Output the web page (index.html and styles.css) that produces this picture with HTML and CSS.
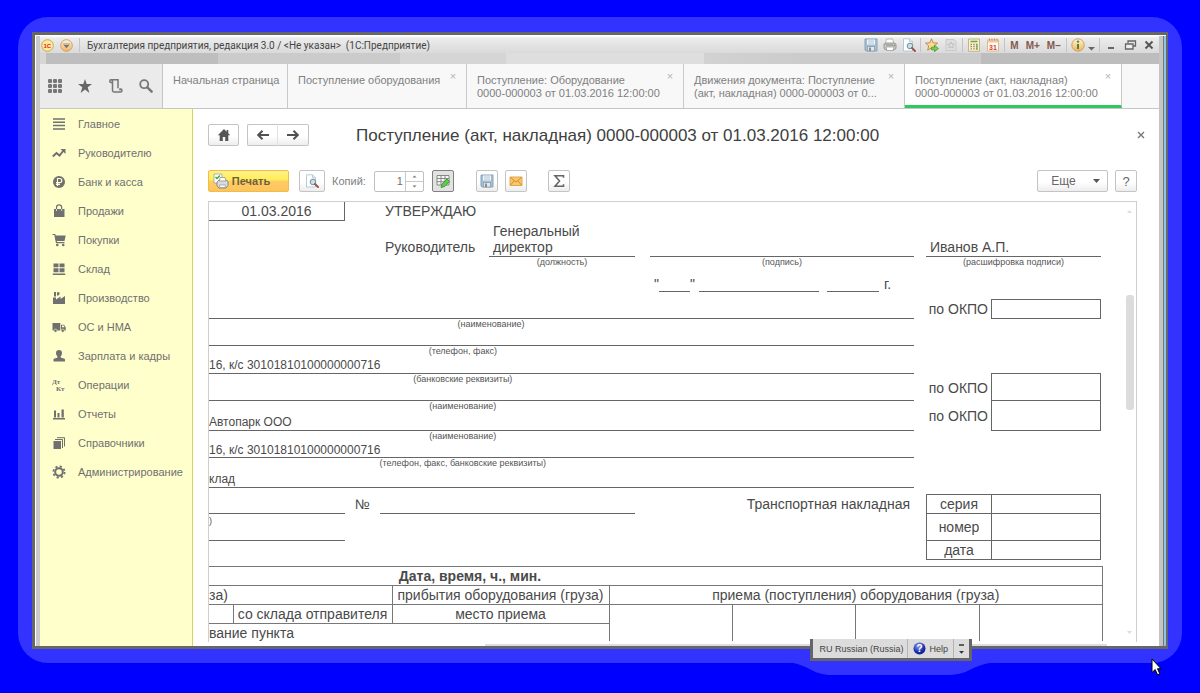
FILE: index.html
```html
<!DOCTYPE html>
<html lang="ru">
<head>
<meta charset="utf-8">
<title>Бухгалтерия предприятия, редакция 3.0</title>
<link rel="stylesheet" href="styles.css">
</head>
<body>
<svg width="0" height="0" class="defs" aria-hidden="true">
  <defs>
    <linearGradient id="gold" x1="0" y1="0" x2="0" y2="1"><stop offset="0" stop-color="#fff6dc"/><stop offset="1" stop-color="#f0b35c"/></linearGradient>
    <radialGradient id="blue" cx=".4" cy=".3" r=".8"><stop offset="0" stop-color="#8fa2f0"/><stop offset=".6" stop-color="#1c2fb0"/><stop offset="1" stop-color="#0b1a80"/></radialGradient>
    <symbol id="i-floppy" viewBox="0 0 14 14"><path d="M1 1h12v12H2l-1-1z" fill="#a5bfd4" stroke="#8ba2b5"/><path d="M3 1.5h8v5H3z" fill="#eef5fa"/><path d="M4 3h6M4 5h6" stroke="#b4c8d8"/><path d="M3.500 8.500h7V13h-7z" fill="#e4e8ea" stroke="#8c9aa5" stroke-width=".8"/><path d="M5 9.500h2V13H5z" fill="#7c8f9e"/></symbol>
    <symbol id="i-printer" viewBox="0 0 14 14"><path d="M3.5 1h6l1.500 4.500H2.500z" fill="#fff" stroke="#aaa" stroke-width=".8"/><path d="M1 6l2-1h8l2 1v4.500l-2 1.500H3l-2-1.500z" fill="#c9c9c6" stroke="#88887f" stroke-width=".8"/><path d="M3 9h8l-1 3.500H4z" fill="#fff" stroke="#999" stroke-width=".7"/><path d="M3 7h7" stroke="#888"/><circle cx="11.300" cy="7.500" r=".8" fill="#5c9e3d"/></symbol>
    <symbol id="i-preview" viewBox="0 0 14 14"><path d="M1.500 .8h6l3 3v9.200h-9z" fill="#fff" stroke="#a9c6d4" stroke-width=".9"/><path d="M7.500 .8v3h3" fill="#dceaf1" stroke="#a9c6d4" stroke-width=".8"/><circle cx="8" cy="8" r="2.800" fill="#c4e2ee" stroke="#7a8c96"/><path d="M10 10l3 3" stroke="#96574c" stroke-width="2" stroke-linecap="round"/></symbol>
    <symbol id="i-favadd" viewBox="0 0 14 14"><path d="M6.500 .8l1.700 4 4.400.3-3.300 2.800 1 4.300-3.800-2.300-3.800 2.300 1-4.300L.5 5.100l4.300-.3z" fill="#fbd98f" stroke="#b9854a" stroke-width=".9"/><path d="M6.500 9.200h3V7.300l4 3.200-4 3.200v-1.900h-3z" fill="#7dcf4f" stroke="#3b8d28" stroke-width=".7"/></symbol>
    <symbol id="i-favs" viewBox="0 0 14 14"><path d="M2 1.500h8l2 2v9H2z" fill="#dedede" stroke="#c9c9c9"/><path d="M7 4l1 2.100 2.300.2-1.700 1.500.5 2.300L7 8.900l-2.100 1.200.5-2.300-1.700-1.500 2.300-.2z" fill="none" stroke="#b7b7b7" stroke-width=".8"/></symbol>
    <symbol id="i-calc" viewBox="0 0 14 14"><path d="M1.500 1h11v12.300h-11z" fill="#f8f1d2" stroke="#c4b484"/><path d="M3.500 2.700h7v1.600h-7z" fill="#6ea950"/><path d="M3.500 6.500h7M3.500 8.700h7M3.500 10.900h7" stroke="#9c8c64" stroke-width="1.300" stroke-dasharray="1.500 1.200"/><path d="M10 6v6" stroke="#5fa247"/></symbol>
    <symbol id="i-cal" viewBox="0 0 14 14"><path d="M1.500 2h11v11h-11z" fill="#fffdf5" stroke="#d9b98a"/><path d="M1.500 1.500h11v3h-11z" fill="#f5c697"/><path d="M3.500 .5v2M6 .5v2M8.500 .5v2M11 .5v2" stroke="#b37f52" stroke-width=".8"/></symbol>
    <symbol id="i-home" viewBox="0 0 14 14"><path d="M7 1L.8 7.300h1.900V13h3.100V9h2.400v4h3.100V7.300h1.900L11.300 5.300V2H9.700v1.700z" fill="#555"/></symbol>
    <symbol id="i-left" viewBox="0 0 14 14"><path d="M13 7H2.500M6.500 2.800L2.200 7l4.300 4.200" fill="none" stroke="#505050" stroke-width="2"/></symbol>
    <symbol id="i-right" viewBox="0 0 14 14"><path d="M1 7h10.500M7.500 2.800L11.800 7l-4.300 4.200" fill="none" stroke="#505050" stroke-width="2"/></symbol>
  </defs>
</svg>

<div class="halo">
  <div class="window">
    <header class="titlebar">
      <svg class="logo" viewBox="0 0 13 13"><circle cx="6.500" cy="6.500" r="5.800" fill="#ffeb9a" stroke="#cda65c"/><text x="6.300" y="9" text-anchor="middle" class="logo-text">1C</text></svg>
      <svg class="logo menu-ball" viewBox="0 0 13 13"><circle cx="6.500" cy="6.500" r="5.800" fill="url(#gold)" stroke="#cfa066"/><path d="M3.500 6h6l-3 3.200z" fill="#777"/><path d="M3 5h7" stroke="#999"/></svg>
      <span class="vsep"></span>
      <span class="app-name">Бухгалтерия предприятия, редакция 3.0 / &lt;Не указан&gt;&nbsp; (1С:Предприятие)</span>
      <div class="tools">
        <svg><use href="#i-floppy"/></svg><svg><use href="#i-printer"/></svg><svg><use href="#i-preview"/></svg>
        <span class="vsep"></span>
        <svg><use href="#i-favadd"/></svg><svg><use href="#i-favs"/></svg>
        <span class="vsep"></span>
        <svg><use href="#i-calc"/></svg>
        <svg viewBox="0 0 14 14"><use href="#i-cal"/><text x="7" y="12" text-anchor="middle" class="cal-text">31</text></svg>
        <span class="vsep"></span>
        <button class="mem">M</button><button class="mem">M+</button><button class="mem">M−</button>
        <span class="vsep"></span>
        <svg viewBox="0 0 14 14"><circle cx="7" cy="7" r="6.200" fill="url(#gold)" stroke="#d09c5a"/><path d="M7 6v5" stroke="#4b8a35" stroke-width="2"/><circle cx="7" cy="3.600" r="1.200" fill="#4b8a35"/></svg>
        <svg class="narrow" viewBox="0 0 7 14"><path d="M0 9h7L3.500 12.500z" fill="#666"/></svg>
        <span class="vsep"></span>
        <svg viewBox="0 0 14 14"><path d="M4 10h6" stroke="#666" stroke-width="2"/></svg>
        <svg viewBox="0 0 14 14"><path d="M5 5V3h7.500v5H10" fill="none" stroke="#666" stroke-width="1.300"/><path d="M2.500 6H10v5H2.500z" fill="#eee" stroke="#666" stroke-width="1.300"/></svg>
        <svg viewBox="0 0 14 14"><path d="M3.500 3.500l7 7M10.500 3.500l-7 7" stroke="#555" stroke-width="1.900"/></svg>
      </div>
    </header>
    <div class="blurstrip"></div>

    <nav class="tabs">
      <div class="quick">
        <svg viewBox="0 0 16 16"><g fill="#777"><rect x="1" y="1" width="4" height="4" rx="1"/><rect x="6" y="1" width="4" height="4" rx="1"/><rect x="11" y="1" width="4" height="4" rx="1"/><rect x="1" y="6" width="4" height="4" rx="1"/><rect x="6" y="6" width="4" height="4" rx="1"/><rect x="11" y="6" width="4" height="4" rx="1"/><rect x="1" y="11" width="4" height="4" rx="1"/><rect x="6" y="11" width="4" height="4" rx="1"/><rect x="11" y="11" width="4" height="4" rx="1"/></g></svg>
        <svg viewBox="0 0 16 16"><path d="M8 1l1.700 5h5.300l-4.300 3.200L12.400 15 8 11.500 3.600 15l1.700-5.800L1 6h5.300z" fill="#666"/></svg>
        <svg viewBox="0 0 16 16"><path d="M4.500 5V3.200A1.700 1.700 0 0 0 2.800 1.800C1.500 1.800 1.500 4.500 2.800 4.500h1.700M2.800 1.800H10v8.500M4.500 4v8.200A1.700 1.700 0 0 0 6.200 14h6.500c1.700 0 1.700-3 0-3H12v1.500" fill="none" stroke="#777" stroke-width="1.500"/></svg>
        <svg viewBox="0 0 16 16"><circle cx="6.200" cy="6.200" r="4" fill="none" stroke="#777" stroke-width="1.800"/><path d="M9.300 9.300l4.400 4.400" stroke="#777" stroke-width="2.400" stroke-linecap="round"/></svg>
      </div>
      <div class="tab t-home"><a href="#">Начальная страница</a></div>
      <div class="tab t-list"><a href="#">Поступление оборудования</a><button class="x" aria-label="Закрыть">×</button></div>
      <div class="tab t-doc"><a href="#">Поступление: Оборудование<br>0000-000003 от 01.03.2016 12:00:00</a><button class="x" aria-label="Закрыть">×</button></div>
      <div class="tab t-moves"><a href="#">Движения документа: Поступление<br>(акт, накладная) 0000-000003 от 0...</a><button class="x" aria-label="Закрыть">×</button></div>
      <div class="tab t-doc active"><a href="#">Поступление (акт, накладная)<br>0000-000003 от 01.03.2016 12:00:00</a><button class="x" aria-label="Закрыть">×</button></div>
      <div class="tab-rest"></div>
    </nav>

    <div class="body">
      <aside class="side">
        <a href="#"><svg viewBox="0 0 14 14"><path d="M1 2h12M1 5.300h12M1 8.600h12M1 12h12" stroke="#707070" stroke-width="1.500"/></svg>Главное</a>
        <a href="#"><svg viewBox="0 0 14 14"><path d="M.8 10.500L4.500 7l3 2.500 4-5" fill="none" stroke="#707070" stroke-width="2"/><path d="M8.500 3h5v5z" fill="#707070"/></svg>Руководителю</a>
        <a href="#"><svg viewBox="0 0 14 14"><circle cx="7" cy="7" r="6" fill="#707070"/><path d="M5.500 11V3.500h2.200a2 2 0 0 1 0 4.200H4M4 9.400h4" fill="none" stroke="#ffffcc" stroke-width="1.200"/></svg>Банк и касса</a>
        <a href="#"><svg viewBox="0 0 14 14"><path d="M2 5h10.500v8H2z" fill="#707070"/><path d="M4.500 7V3.500a2.600 2.600 0 0 1 5.200 0V7" fill="none" stroke="#707070" stroke-width="1.200"/><path d="M4.500 5v2M9.700 5v2" stroke="#ffffcc" stroke-width=".8"/></svg>Продажи</a>
        <a href="#"><svg viewBox="0 0 14 14"><path d="M.5 1.500h2.300l1.700 8.200h8" fill="none" stroke="#707070" stroke-width="1.200"/><path d="M3 2.500h10.700L12.500 8H4z" fill="#707070"/><circle cx="5.300" cy="12" r="1.300" fill="#707070"/><circle cx="11.200" cy="12" r="1.300" fill="#707070"/></svg>Покупки</a>
        <a href="#"><svg viewBox="0 0 14 14"><path d="M1.500 1.500h5v3.800h-5zM7.500 1.500h5v3.800h-5zM1.500 6.300h5v4h-5zM7.500 6.300h5v4h-5zM.8 11.500h12.400V13H.8z" fill="#707070"/></svg>Склад</a>
        <a href="#"><svg viewBox="0 0 14 14"><path d="M1 13V6.500h3V8.500l4.500-3V8L13 5v8z" fill="#707070"/><path d="M2 5.500V1h2v4.500zM5 4.500V1.200h2.500V3L6.500 4.500z" fill="#707070"/></svg>Производство</a>
        <a href="#"><svg viewBox="0 0 14 14"><path d="M.5 3h7.800v7.500H.5zM9 4.800h3l1.700 2.500v3.200H9z" fill="#707070"/><path d="M10 5.600h1.700l.9 1.600H10z" fill="#ffffcc"/><circle cx="3.500" cy="10.700" r="1.600" fill="#707070" stroke="#ffffcc" stroke-width=".6"/><circle cx="10.800" cy="10.700" r="1.600" fill="#707070" stroke="#ffffcc" stroke-width=".6"/></svg>ОС и НМА</a>
        <a href="#"><svg viewBox="0 0 14 14"><path d="M7 1c2 0 3 1.200 3 3 0 1.500-.6 2.600-1.400 3.300L9 8.800l3 .8c.8.300 1 .8 1 1.500V12.500H1.500v-1.400c0-.7.200-1.200 1-1.500l2.700-.8.300-1.500C4.600 6.600 4 5.500 4 4c0-1.800 1-3 3-3z" fill="#707070"/></svg>Зарплата и кадры</a>
        <a href="#"><svg viewBox="0 0 14 14"><text x="0" y="6" class="dk-text">Дт</text><text x="4" y="13" class="dk-text">Кт</text></svg>Операции</a>
        <a href="#"><svg viewBox="0 0 14 14"><path d="M2 3.500h2v7H2zM5.500 6h2v4.500h-2zM9.500 2.500h2.300v8H9.500zM1 11h12v1.500H1z" fill="#707070"/></svg>Отчеты</a>
        <a href="#"><svg viewBox="0 0 14 14"><path d="M1.500 5h7.500v8H1.500z" fill="#707070"/><path d="M3 3.500h7.500v8.500M5 1.700h7.500v8.800" fill="none" stroke="#707070"/></svg>Справочники</a>
        <a href="#"><svg viewBox="0 0 14 14"><circle cx="7" cy="7" r="3.800" fill="none" stroke="#707070" stroke-width="2"/><circle cx="7" cy="7" r="5.600" fill="none" stroke="#707070" stroke-width="1.800" stroke-dasharray="2.200 2.200"/></svg>Администрирование</a>
      </aside>

      <main class="content">
        <div class="headrow">
          <button class="btn home" aria-label="Начальная страница"><svg><use href="#i-home"/></svg></button>
          <div class="pair"><button class="btn" aria-label="Назад"><svg><use href="#i-left"/></svg></button><button class="btn" aria-label="Вперед"><svg><use href="#i-right"/></svg></button></div>
          <h1>Поступление (акт, накладная) 0000-000003 от 01.03.2016 12:00:00</h1>
          <button class="close" aria-label="Закрыть"><svg viewBox="0 0 8 8"><path d="M1 1l6 6M7 1L1 7" stroke="#777" stroke-width="1.400"/></svg></button>
        </div>
        <div class="toolrow">
          <button class="btn print"><svg viewBox="0 0 16 16"><path d="M1 1h8v9H1z" fill="#fff" stroke="#9aa694" stroke-width=".8"/><path d="M2.500 4l1.500 1.500L7 2.500" fill="none" stroke="#3da336" stroke-width="1.300"/><path d="M4 9l2-2h7l2 1.500v4L13 15H6l-2-2z" fill="#d9dbdc" stroke="#70777c" stroke-width=".8"/><path d="M7 4.500h5L13 8H6.500z" fill="#fff" stroke="#888" stroke-width=".7"/><path d="M6.500 12h6l-.5 2.500H7z" fill="#fff" stroke="#888" stroke-width=".6"/></svg>Печать</button>
          <button class="btn preview" aria-label="Просмотр"><svg><use href="#i-preview"/></svg></button>
          <label for="copies">Копий:</label>
          <div class="spin"><input id="copies" type="text" value="1"><div class="steps"><button aria-label="Больше"><svg viewBox="0 0 5 3"><path d="M.5 2.500L2.500.5l2 2z" fill="#777"/></svg></button><button aria-label="Меньше"><svg viewBox="0 0 5 3"><path d="M.5.5l2 2 2-2z" fill="#777"/></svg></button></div></div>
          <button class="btn sq on" aria-label="Редактирование"><svg viewBox="0 0 14 14"><path d="M1 1.500h12v9.500H1z" fill="#f7f7f7" stroke="#888"/><path d="M1 4.500h12M1 7.700h12M5 1.500V11M9 1.500V11" stroke="#888"/><path d="M5 13.500l1-3.500 5-5 2.700 2.500-5 5z" fill="#5fc94b" stroke="#2f8f2a" stroke-width=".8"/></svg></button>
          <button class="btn sq save" aria-label="Сохранить"><svg><use href="#i-floppy"/></svg></button>
          <button class="btn sq mail" aria-label="Отправить"><svg viewBox="0 0 14 14"><path d="M1 3h12v8.500H1z" fill="#fbc766" stroke="#e0a850"/><path d="M1.500 3.500L7 8l5.500-4.500M1.500 11L5 7M12.500 11L9 7" fill="none" stroke="#c9862c" stroke-width=".9"/></svg></button>
          <button class="btn sq sum" aria-label="Сумма"><svg viewBox="0 0 14 14"><path d="M11.500 3.800V1.800H3L7.500 7 3 12.200h8.500v-2" fill="none" stroke="#666" stroke-width="1.600"/></svg></button>
          <button class="btn more">Еще<svg viewBox="0 0 7 4"><path d="M0 0h7L3.500 4z" fill="#555"/></svg></button>
          <button class="btn sq help">?</button>
        </div>

        <section class="pane">
          <div class="view">
            <div class="form">
              <div class="c date-box">01.03.2016</div>
              <div class="c approve">УТВЕРЖДАЮ</div>
              <div class="c head">Руководитель</div>
              <div class="c post line">Генеральный<br>директор</div>
              <div class="c sign line"></div>
              <div class="c name line">Иванов А.П.</div>
              <small class="post-cap">(должность)</small>
              <small class="sign-cap">(подпись)</small>
              <small class="name-cap">(расшифровка подписи)</small>
              <div class="when"><span>"</span><i class="d"></i><span>"</span><i class="m"></i><i class="y"></i><span>г.</span></div>
              <div class="l r5"></div>
              <div class="l r7"><small class="far">(наименование)</small></div>
              <div class="l r8"><small>(телефон, факс)</small><span>16, к/с 30101810100000000716</span></div>
              <div class="l r9"><small>(банковские реквизиты)</small></div>
              <div class="l r10"><small>(наименование)</small><span>Автопарк ООО</span></div>
              <div class="l r11"><small>(наименование)</small><span>16, к/с 30101810100000000716</span></div>
              <div class="l r12"><small>(телефон, факс, банковские реквизиты)</small><span>клад</span></div>
              <div class="okpo k5">по ОКПО</div><div class="box b5 top"></div>
              <div class="okpo k9">по ОКПО</div><div class="box b9 top"></div>
              <div class="okpo k10">по ОКПО</div><div class="box b10"></div>
              <div class="c num-l line"></div>
              <div class="c num-sign">№</div>
              <div class="c num-r line"></div>
              <div class="c waybill">Транспортная накладная</div>
              <div class="c paren line"><small>)</small></div>
              <div class="lab s1 top">серия</div><div class="box v1 top"></div>
              <div class="lab s2">номер</div><div class="box v2"></div>
              <div class="lab s3">дата</div><div class="box v3"></div>
            </div>
            <table class="times">
              <colgroup><col class="w1"><col class="w2"><col class="w3"><col class="w4"><col class="w4"><col class="w4"><col class="w4"></colgroup>
              <tr><th colspan="7">Дата, время, ч., мин.</th></tr>
              <tr><td colspan="2" class="tl">за)</td><td>прибытия оборудования (груза)</td><td colspan="4">приема (поступления) оборудования (груза)</td></tr>
              <tr><td></td><td>со склада отправителя</td><td>место приема</td><td rowspan="2"></td><td rowspan="2"></td><td rowspan="2"></td><td rowspan="2"></td></tr>
              <tr><td colspan="3" class="tl">вание пункта</td></tr>
            </table>
          </div>
          <div class="vscroll"><svg viewBox="0 0 5 3"><path d="M0 3L2.500 0 5 3z" fill="#ddd"/></svg><div class="track"><div class="thumb"></div></div><svg viewBox="0 0 5 3"><path d="M0 0l2.500 3L5 0z" fill="#ddd"/></svg></div>
        </section>
        <div class="hscroll"></div>
      </main>
    </div>
  </div>

  <svg class="bump" viewBox="0 0 210 16"><path d="M0 0C22 2 24 13 46 13H160C184 13 184 2 210 0z" fill="#3333ff"/></svg>
  <div class="langbar">
    <button>RU Russian (Russia)</button>
    <button class="lhelp"><svg viewBox="0 0 13 13"><circle cx="6.500" cy="6.500" r="6" fill="url(#blue)"/><text x="6.500" y="10" text-anchor="middle" class="q-text">?</text></svg>Help</button>
    <button class="lopt" aria-label="Параметры"><svg viewBox="0 0 5 10"><path d="M0 1h5" stroke="#333" stroke-width="1.500"/><path d="M0 7h5L2.500 9.800z" fill="#333"/></svg></button>
  </div>
  <svg class="cursor" viewBox="0 0 11 18"><path d="M1 1v13.500l3.200-3 2.300 5.300 2.300-1-2.300-5.100H10z" fill="#fff" stroke="#000"/></svg>
</div>
</body>
</html>
```

FILE: styles.css
```css
* { box-sizing: border-box; }
body { margin: 0; min-height: 100vh; display: flex; flex-direction: column; background: #0000ff; font-family: "Liberation Sans", Arial, sans-serif; font-size: 11px; color: #666; overflow: hidden; }
button { font: inherit; color: inherit; border: 0; background: none; padding: 0; margin: 0; display: flex; align-items: center; justify-content: center; }
a { color: inherit; text-decoration: none; }
svg { display: block; flex: none; }
.defs { position: absolute; }

.halo { position: relative; flex: 1; display: flex; margin: 17px 18px 30px; padding: 15px 14px 14px; border-radius: 30px; background: #3333ff; }
.window { flex: 1; min-width: 0; display: flex; flex-direction: column; border: 3px solid #666; border-right-width: 2px; padding-left: 5px; padding-right: 7px; background: linear-gradient(270deg, #8ec6ea 2px, #777 2px, #777 3px, #c4c4c4 3px, #c4c4c4 7px, transparent 7px), #cacaca; box-shadow: inset 1px 1px #fff; }

.titlebar { height: 18px; display: flex; align-items: center; padding-top: 2px; background: linear-gradient(#fff 1px, #ececec 3px, #dadada); }
.logo { width: 13px; height: 13px; margin-left: 1px; }
.menu-ball { margin: 0 6px 0 6px; }
.logo-text { font: bold 6px "Liberation Sans", sans-serif; fill: #d22; }
.cal-text { font: bold 7px "Liberation Sans", sans-serif; fill: #e03a2a; }
.dk-text { font: bold 7px "Liberation Serif", serif; fill: #707070; }
.q-text { font: bold 10px "Liberation Sans", sans-serif; fill: #fff; }
.vsep { width: 1px; height: 14px; background: #c4c4c4; }
.app-name { margin-left: 7px; font-family: Roboto, sans-serif; font-size: 10px; color: #444; white-space: nowrap; }
.tools { margin-left: auto; margin-right: 3px; display: flex; align-items: center; gap: 5px; }
.tools svg { width: 14px; height: 14px; }
.tools .vsep { margin: 0 -1px; }
.tools .narrow { width: 7px; margin-left: -2px; }
.mem { padding: 0 1px; font-weight: bold; font-size: 10px; color: #85594c; }
.blurstrip { height: 11px; background: linear-gradient(90deg, #d6d6d6 6px, #bebebe 6px, #bebebe 178px, #cbcbcb 178px, #cbcbcb 360px, #d5d5d5 360px, #d5d5d5 466px, #dedede 466px, #dedede 664px, #d2d2d2 664px, #cbcbcb 768px, #cbcbcb 941px, #bdbdbd 941px); }

.tabs { display: flex; height: 45px; background: #f8f8f8; border-bottom: 1px solid #c6c6c6; }
.quick { flex: 0 0 123px; display: flex; align-items: center; justify-content: space-between; padding: 0 8px 0 7px; background: #ebebeb; border-right: 1px solid #c6c6c6; }
.quick svg { width: 16px; height: 16px; }
.tab { position: relative; padding: 10px 4px 0 10px; border-right: 1px solid #c9c9c9; line-height: 13px; color: #808080; white-space: nowrap; min-width: 0; }
.tab a { display: block; overflow: hidden; }
.t-home { flex: 0 1 125px; }
.t-list { flex: 0 1 179px; }
.t-doc { flex: 0 1 217px; }
.t-moves { flex: 0 1 221px; }
.active { background: #fff; border-bottom: 3px solid #2ec861; }
.x { position: absolute; top: 6px; right: 8px; width: 10px; height: 12px; font-size: 11px; color: #b4b4b4; }
.tab-rest { flex: 1; }

.body { flex: 1; display: flex; min-height: 0; }
.side { flex: 0 0 153px; background: #ffffcc; border-right: 1px solid #d8d45c; }
.side a { display: flex; align-items: center; gap: 12px; height: 29px; padding-left: 12px; color: #707070; }
.side svg { width: 14px; height: 14px; }
.content { flex: 1; min-width: 0; display: flex; flex-direction: column; padding: 15px 22px 0 15px; background: #fff; }

.btn { height: 22px; border: 1px solid #c4c4c4; border-radius: 2px; background: linear-gradient(#fff 55%, #ededed); color: #666; }
.btn svg { width: 14px; height: 14px; }
.headrow { display: flex; align-items: center; height: 22px; }
.home { width: 31px; }
.pair { display: flex; margin-left: 8px; }
.pair .btn { width: 31px; }
.pair .btn:first-child { border-radius: 2px 0 0 2px; border-right-color: #e2e2e2; }
.pair .btn:last-child { border-left: 0; border-radius: 0 2px 2px 0; }
h1 { margin: 0 0 0 47px; padding-top: 2px; font-size: 17px; line-height: 22px; font-weight: normal; color: #404040; white-space: nowrap; }
.close { margin-left: auto; margin-right: -8px; width: 8px; height: 22px; }
.close svg { width: 8px; height: 8px; }
.toolrow { display: flex; align-items: center; height: 22px; margin-top: 24px; }
.print { width: 81px; gap: 3px; padding-right: 14px; border-color: #eebd4c; background: linear-gradient(#fff08a, #ffee55 45%, #ffcc66 50%, #fdc45c); font-weight: bold; color: #6d6040; }
.print svg { width: 16px; height: 16px; }
.preview { width: 26px; margin-left: 10px; }
.toolrow label { margin-left: 7px; color: #808080; }
.spin { display: flex; margin-left: 8px; width: 50px; height: 21px; border: 1px solid #c0c0c0; border-radius: 2px; }
.spin input { flex: 1; min-width: 0; border: 0; padding: 0 2px; font: inherit; color: #707070; text-align: right; background: none; }
.steps { width: 18px; border-left: 1px solid #c8c8c8; display: flex; flex-direction: column; }
.steps button { flex: 1; }
.steps button:first-child { border-bottom: 1px solid #c8c8c8; }
.steps svg { width: 5px; height: 3px; }
.sq { width: 22px; margin-left: 7px; }
.on { margin-left: 8px; border-color: #808080; background: #e2e2e2; }
.save { margin-left: 22px; }
.sum { margin-left: 21px; }
.more { width: 71px; margin-left: auto; gap: 17px; padding-left: 6px; font-size: 12px; }
.more svg { width: 7px; height: 4px; }
.help { font-size: 13px; }

.pane { flex: 1; min-height: 0; display: flex; margin-top: 9px; border: 1px solid #cfcfcf; border-bottom: 0; }
.view { flex: 1; min-width: 0; overflow: hidden; height: 439px; font-size: 14px; color: #4a4a4a; }
.form { display: grid; margin-right: 18px; line-height: 16px;
  grid-template-columns: 136fr 35fr 5fr 104fr 146fr 15fr 264fr 12fr 66fr 109fr 1fr;
  grid-template-rows: 19px 36px 12px 23px 7px 20px 27px 28px 27px 30px 27px 30px 6px 20px 27px 19px 6px; }
.form > * { min-width: 0; white-space: nowrap; }
small { font-size: 9px; line-height: 11px; text-align: center; color: #555; }
.line, .l { border-bottom: 1px solid #666; }
.date-box { grid-area: 1 / 1; border: solid #666; border-width: 0 1px 1px 0; text-align: center; line-height: 18px; }
.approve { grid-area: 1 / 4 / 2 / 6; line-height: 18px; }
.head { grid-area: 2 / 4 / 3 / 5; align-self: end; padding-bottom: 2px; }
.post { grid-area: 2 / 5; padding: 2px 4px 0; }
.sign { grid-area: 2 / 7; }
.name { grid-area: 2 / 9 / 3 / 11; padding: 18px 4px 0; }
.post-cap { grid-area: 3 / 5; }
.sign-cap { grid-area: 3 / 7; }
.name-cap { grid-area: 3 / 9 / 4 / 11; }
.when { grid-area: 4 / 7; display: flex; align-items: flex-end; padding-left: 4px; }
.when i { border-bottom: 1px solid #666; }
.when .d { flex: 0 1 31px; }
.when .m { flex: 0 1 120px; margin: 0 8px 0 4px; }
.when .y { flex: 0 1 52px; margin-right: 5px; }
.l { grid-column: 1 / 8; display: flex; flex-direction: column; justify-content: space-between; font-size: 12px; }
.l small { width: 72%; }
.l .far { width: 80%; }
.r5 { grid-row: 6; } .r7 { grid-row: 7; } .r8 { grid-row: 8; } .r9 { grid-row: 9; } .r10 { grid-row: 10; } .r11 { grid-row: 11; } .r12 { grid-row: 12; }
.okpo { grid-column: 9; align-self: center; text-align: right; padding-right: 4px; }
.k5 { grid-row: 6; } .k9 { grid-row: 9; } .k10 { grid-row: 10; }
.box, .lab { border: solid #666; border-width: 0 1px 1px; }
.box { grid-column: 10; margin-left: -1px; }
.form > .top { border-top-width: 1px; }
.b5 { grid-row: 6; } .b9 { grid-row: 9; } .b10 { grid-row: 10; }
.b9 { margin-top: -1px; }
.num-l { grid-area: 14 / 1; }
.num-sign { grid-area: 14 / 2; text-align: center; line-height: 20px; }
.num-r { grid-area: 14 / 3 / 15 / 6; }
.waybill { grid-area: 14 / 7; text-align: right; padding-right: 4px; line-height: 20px; }
.paren { grid-area: 15 / 1; line-height: 11px; }
.lab { grid-column: 9; display: grid; place-items: center; }
.s1, .v1 { grid-row: 14; } .s2, .v2 { grid-row: 15; } .s3, .v3 { grid-row: 16; }

.times { width: calc(100% - 17px); table-layout: fixed; border-collapse: collapse; line-height: 16px; }
.times th, .times td { border: 1px solid #777; height: 19px; padding: 0; text-align: center; white-space: nowrap; }
.times th { padding-right: 371px; border-left: 0; }
.times td:first-child { border-left: 0; }
.times .tl { text-align: left; }
.w1 { width: 24px; } .w2 { width: 159px; } .w3 { width: 217px; }

.vscroll { flex: 0 0 16px; display: flex; flex-direction: column; align-items: center; padding: 8px 0; margin-right: -2px; }
.vscroll { margin-right: 0; padding-left: 3px; }
.vscroll svg { width: 5px; height: 3px; }
.track { flex: 1; padding-top: 82px; }
.thumb { width: 8px; height: 115px; border-radius: 3px; background: #dcdcdc; }
.hscroll { height: 2px; width: 67%; margin: 2px 30px 0 auto; background: #ddd; }

.bump { position: absolute; right: 185px; bottom: -15px; width: 210px; height: 16px; }
.langbar { position: absolute; right: 210px; bottom: 2px; display: flex; height: 22px; padding-left: 2px; border: 3px solid #666; border-top: 0; background: #dcdcdc; color: #444; font-size: 9px; white-space: nowrap; }
.langbar button { padding: 0 4px; border-right: 1px solid #b4b4b4; }
.langbar svg { width: 13px; height: 13px; }
.langbar .lhelp { gap: 3px; padding: 0 5px; }
.langbar .lopt { border: 0; padding: 0 5px; }
.langbar .lopt svg { width: 5px; height: 10px; }
.cursor { position: absolute; right: 20px; bottom: -13px; width: 11px; height: 18px; }
```
